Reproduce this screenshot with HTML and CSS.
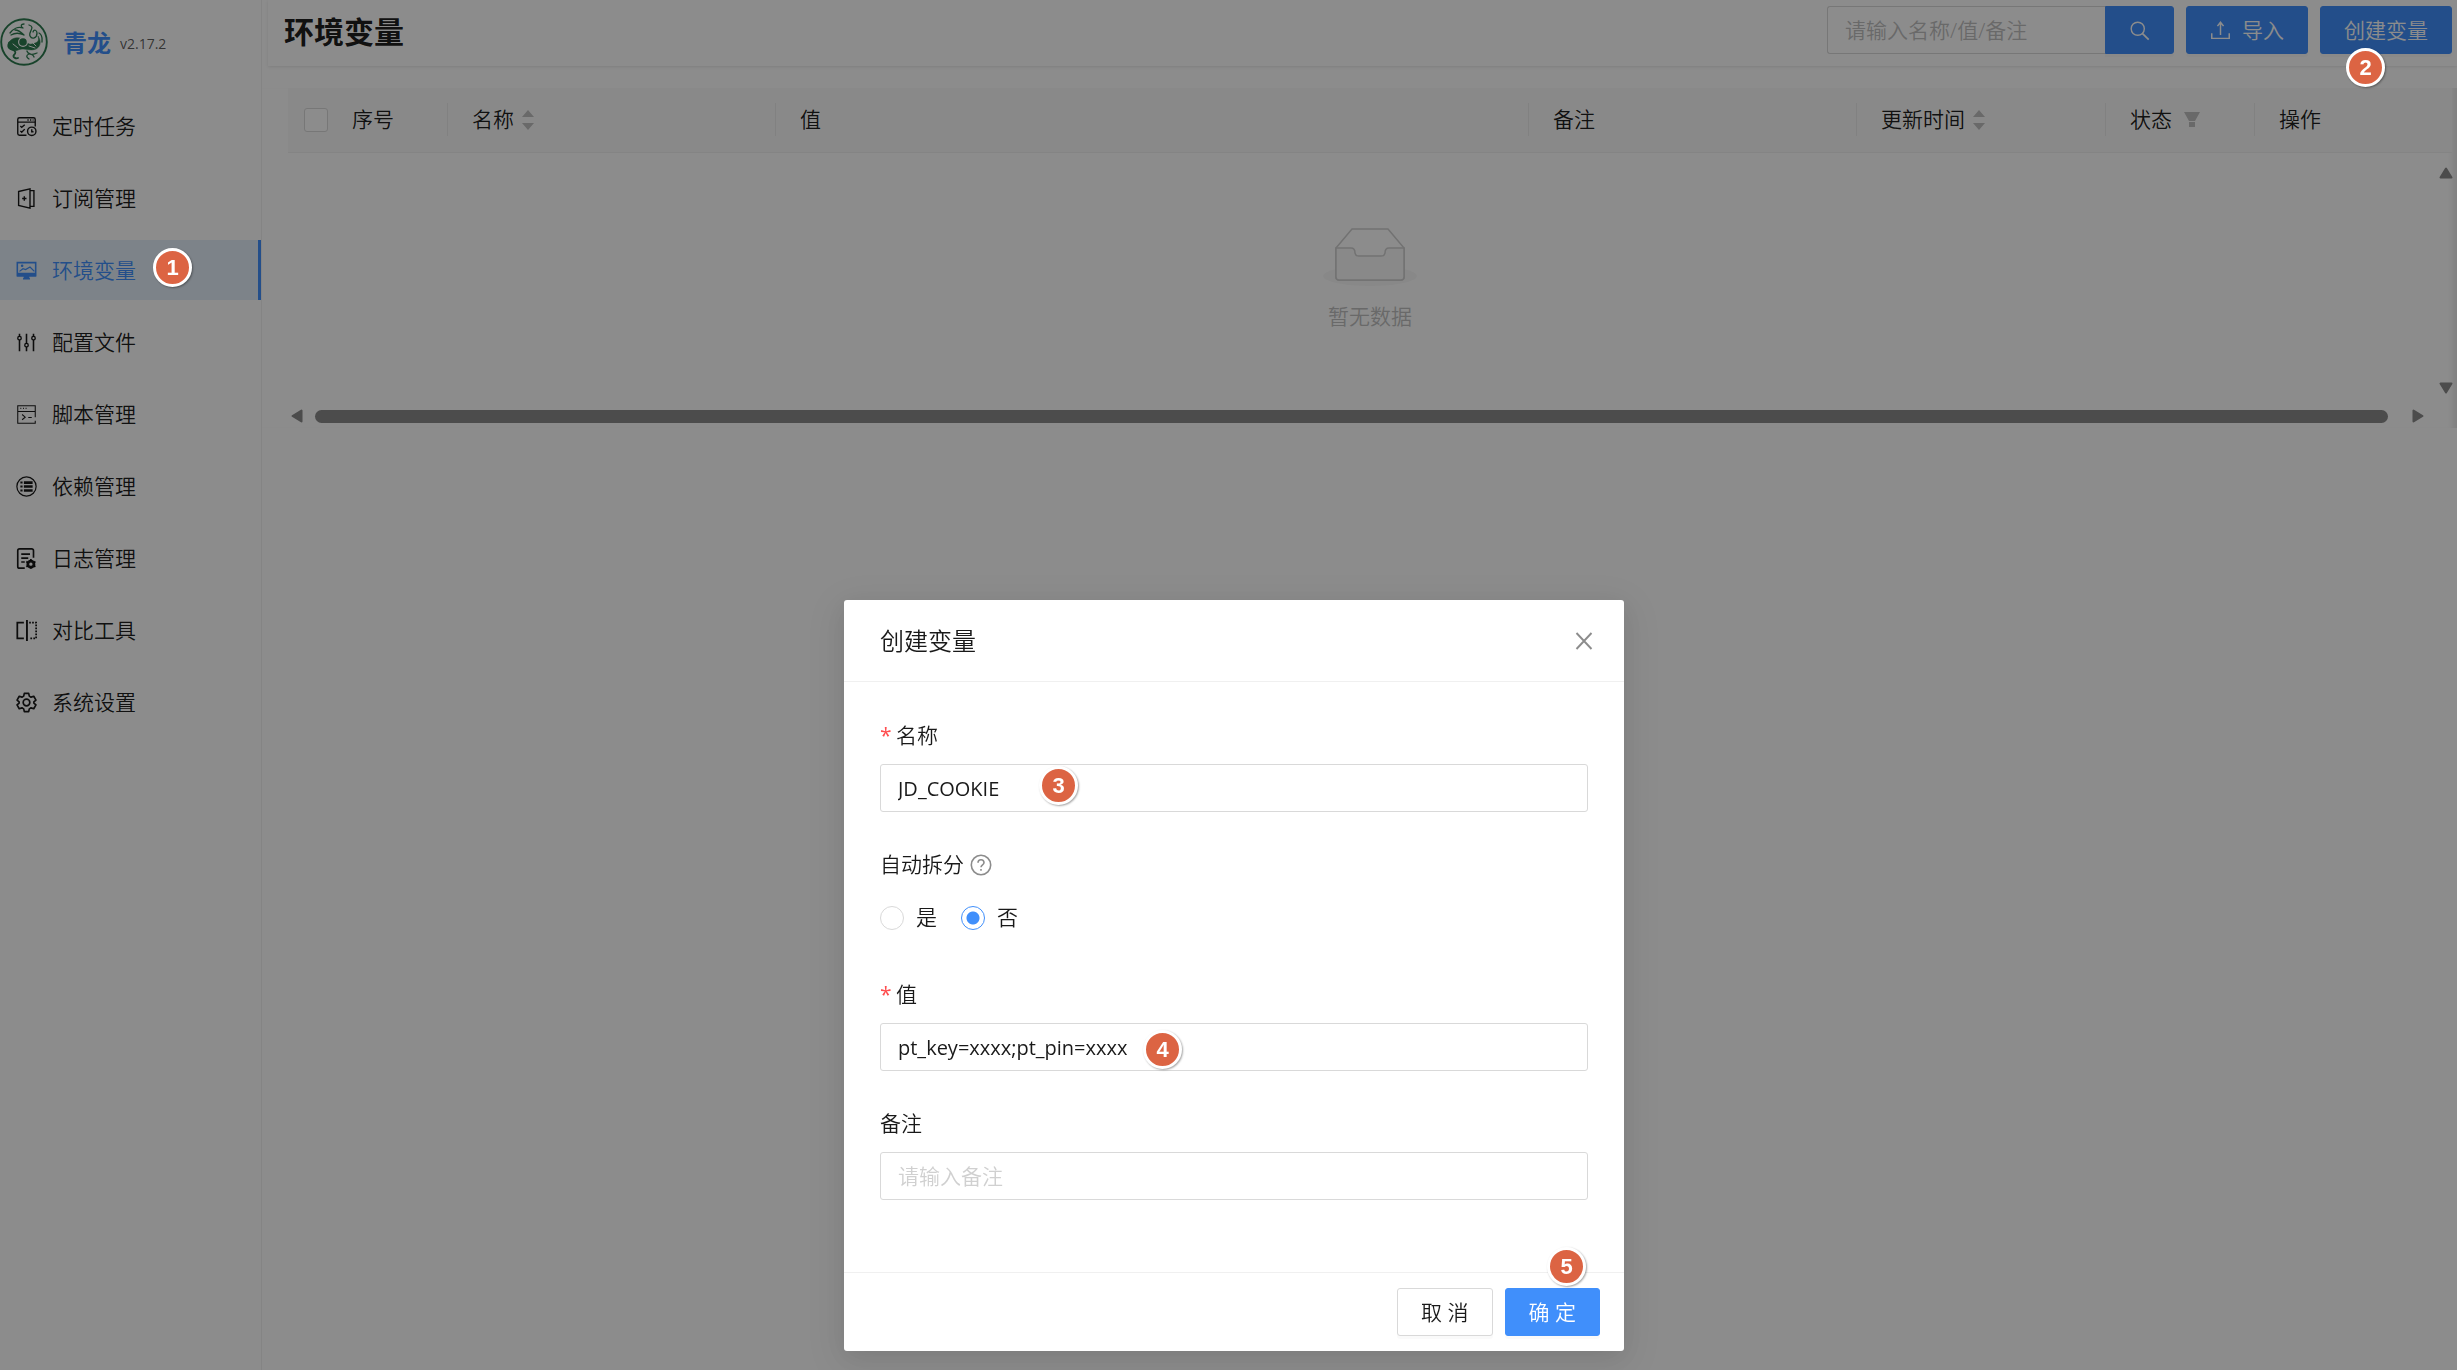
FILE: index.html
```html
<!DOCTYPE html>
<html lang="zh-CN">
<head>
<meta charset="utf-8">
<meta name="viewport" content="width=device-width, initial-scale=1">
<title>环境变量 - 青龙</title>
<link rel="stylesheet" href="styles.css">
</head>
<body>
<div class="layout">
  <aside class="sider">
    <div class="brand">
      <svg class="brand-logo" viewBox="0 0 48 48" fill="none" stroke="#2d7a4f" stroke-linecap="round">
        <circle cx="24" cy="24" r="22.8" stroke-width="1.900"/>
        <path d="M9 25c-2 5 1 6 4 7s3 3 1 5 2 4 4 3" stroke-width="1.800"/>
        <path d="M9 24c4-5 9-5 14-3 4 2 4 6 9 5 4-1 8-2 6-8 4 6 2 11-2 13-5 2-9 0-13 0-5 0-6 3-11 1-4-1-5-4-3-8z" fill="#2d7a4f" stroke-width=".5"/>
        <circle cx="23" cy="24" r="5" fill="#fff" stroke="none"/>
        <circle cx="23" cy="24" r="3.800" fill="#2d7a4f" stroke="none"/>
        <path d="M10 15c3-4 8-7 13-5M11 17c5-3 9-2 13 0M15 12c4 0 6 2 9 5M23 10c-3-2-2-4 1-4M29 7c7 2-1 7 1 11s7 2 7-3c0-3-3-4-4-1M27 33c0 3 7 3 7 6M28 35c4 3 6 1 9 0M29 41c-3-2-3-4 0-5M39 15c4 2 3 6 3 9" stroke-width="1.300"/>
        <path d="M13 26l5 4M29 28l6 2M33 25l3 3" stroke="#fff" stroke-width="1"/>
      </svg>
      <span class="brand-name">青龙</span>
      <span class="brand-version">v2.17.2</span>
    </div>
    <nav class="menu">
      <a class="menu-item" href="#crontab"><svg class="icon" viewBox="0 0 24 24"><path d="M22 12V4a2 2 0 0 0-2-2H4a2 2 0 0 0-2 2v16a2 2 0 0 0 2 2h8M2 7h20M13 4.500h1.500M16 4.500h1.500M19 4.500h1M5 11.500l1.500 1.500L10 10M5 17l1.500 1.500L10 15"/><circle cx="18" cy="17.500" r="4.800"/><path d="M18 15v3h2"/></svg><span>定时任务</span></a>
      <a class="menu-item" href="#subscription"><svg class="icon" viewBox="0 0 24 24"><path d="M3 4l13-3v22L3 20zM16 3h4.500v18H16M7 12h5M9.500 9.500v5"/></svg><span>订阅管理</span></a>
      <a class="menu-item active" href="#env" aria-current="page"><svg class="icon" viewBox="0 0 24 24"><path d="M1.500 3h21v15h-21z" stroke-width="1.800"/><path d="M4 13l4-3 3 1 5-3 5 5" stroke-width="1.400"/><circle cx="7" cy="6.500" r=".7" fill="currentColor"/><path d="M2 15.500h20V18H2zM9.500 18h5v3h-5z" fill="currentColor"/><path d="M8 21.500h8"/></svg><span>环境变量</span></a>
      <a class="menu-item" href="#config"><svg class="icon" viewBox="0 0 24 24"><path d="M4 2v3M4 9v13M12 2v11M12 17v5M20 2v3M20 9v13" stroke-width="1.800"/><circle cx="4" cy="7" r="2"/><circle cx="12" cy="15" r="2"/><circle cx="20" cy="7" r="2"/></svg><span>配置文件</span></a>
      <a class="menu-item" href="#script"><svg class="icon thin" viewBox="0 0 24 24"><path d="M22 15V2H2v20h20v-3M2 8.500h20M5 5h1M8 5h1M11 5h1M7 12l3.500 3L7 18M14 15.500h4"/></svg><span>脚本管理</span></a>
      <a class="menu-item" href="#dependence"><svg class="icon" viewBox="0 0 24 24"><circle cx="12" cy="12" r="11" stroke-width="1.400"/><path d="M9 7.500h10M9 12h10M9 16.500h10" stroke-width="3"/><path d="M5 7.500h2.500M5 12h2.500M5 16.500h2.500" stroke-width="2.400"/></svg><span>依赖管理</span></a>
      <a class="menu-item" href="#log"><svg class="icon" viewBox="0 0 24 24"><path d="M20 11V3a2 2 0 0 0-2-2H4a2 2 0 0 0-2 2v18a2 2 0 0 0 2 2h6M6 7h10M6 11.500h8M6 16h4" stroke-width="1.900"/><circle cx="17" cy="18.500" r="3.500" stroke-width="3.200"/><path d="M17 12.500v2M17 22.500v1M11.800 15.500l1.500 1M20.700 20.500l1.500 1M11.800 21.500l1.500-1M20.700 16.500l1.500-1" stroke-width="2"/></svg><span>日志管理</span></a>
      <a class="menu-item" href="#diff"><svg class="icon" viewBox="0 0 24 24"><path d="M9 3H1.500v18H9" stroke-width="2"/><path d="M12.500 0v24" stroke-width="2.200"/><path d="M15 3h8v18h-8" stroke-width="2" stroke-dasharray="2 1.400"/></svg><span>对比工具</span></a>
      <a class="menu-item" href="#setting"><svg class="icon" viewBox="0 0 24 24"><path stroke-width="1.900" stroke-linejoin="round" d="M9.500 1.500h5l.7 3.200 2 1.200 3.100-1 2.500 4.300-2.400 2.200v1.200l2.400 2.200-2.500 4.300-3.100-1-2 1.200-.7 3.200h-5l-.7-3.200-2-1.200-3.100 1-2.500-4.300 2.400-2.200v-1.200L1.200 9.200l2.500-4.300 3.100 1 2-1.200z"/><circle cx="12" cy="12" r="3.800" stroke-width="1.900"/></svg><span>系统设置</span></a>
    </nav>
  </aside>

  <main class="main">
    <header class="page-header">
      <h1 class="page-title">环境变量</h1>
      <div class="actions">
        <form class="search" role="search">
          <input class="search-input" type="search" aria-label="搜索" placeholder="请输入名称/值/备注">
          <button class="btn btn-primary search-btn" type="button" aria-label="搜索"><svg class="icon" viewBox="0 0 24 24"><circle cx="10" cy="10" r="7.500"/><path d="M15.500 15.500l7 7" stroke-width="2"/></svg></button>
        </form>
        <button class="btn btn-primary" type="button"><svg class="icon" viewBox="0 0 24 24"><path d="M2 15v6h20v-6M12 17V4M8.500 7L12 2.500 15.500 7" stroke-width="1.700"/></svg><span>导入</span></button>
        <button class="btn btn-primary" type="button">创建变量</button>
      </div>
    </header>

    <section class="table-area">
      <table class="table">
        <colgroup><col class="col-index"><col class="col-name"><col><col class="col-name"><col class="col-time"><col class="col-status"><col class="col-action"></colgroup>
        <thead>
          <tr>
            <th class="th-index"><div class="th-inner"><input class="checkbox" type="checkbox" aria-label="全选"><span>序号</span></div></th>
            <th><div class="th-inner">名称<svg class="sorter" viewBox="0 0 12 20"><path d="M6 0l6 7H0zM6 20l6-7H0z"/></svg></div></th>
            <th>值</th>
            <th>备注</th>
            <th><div class="th-inner">更新时间<svg class="sorter" viewBox="0 0 12 20"><path d="M6 0l6 7H0zM6 20l6-7H0z"/></svg></div></th>
            <th><div class="th-inner wide">状态<svg class="filter" viewBox="0 0 16 16"><path d="M0 0h16l-5 9H5zM5 10h6v5H5z"/></svg></div></th>
            <th>操作</th>
          </tr>
        </thead>
        <tbody>
          <tr>
            <td colspan="7">
              <div class="empty">
                <svg class="empty-icon" viewBox="0 0 96 60" fill="none" stroke="#d0d0d0" stroke-width="1.500">
                  <ellipse cx="48" cy="50" rx="47" ry="10" fill="#f8f8f8" stroke="none"/>
                  <path d="M14 22L30 3h36l16 19v29a3 3 0 0 1-3 3H17a3 3 0 0 1-3-3z" fill="#fff"/>
                  <path d="M14 22h15c3 0 4 2 4 5 1 3 2 3 4 3h22c2 0 3 0 4-3 0-3 1-5 4-5h15v29a3 3 0 0 1-3 3H17a3 3 0 0 1-3-3z" fill="#fafafa"/>
                </svg>
                <span>暂无数据</span>
              </div>
            </td>
          </tr>
        </tbody>
      </table>
      <div class="hscroll">
        <svg class="arrow-h" viewBox="0 0 12 14"><path d="M10.500 1.500v11L1.500 7z"/></svg>
        <div class="thumb"></div>
        <svg class="arrow-h" viewBox="0 0 12 14"><path d="M1.500 1.500v11l9-5.500z"/></svg>
      </div>
      <div class="vscroll">
        <svg class="arrow-v" viewBox="0 0 14 12"><path d="M1.500 10.500h11L7 1.500z"/></svg>
        <svg class="arrow-v" viewBox="0 0 14 12"><path d="M1.500 1.500h11L7 10.500z"/></svg>
      </div>
    </section>
  </main>
</div>

<div class="mask">
  <div class="modal" role="dialog" aria-modal="true" aria-labelledby="modal-title">
    <div class="modal-header">
      <h2 class="modal-title" id="modal-title">创建变量</h2>
      <button class="close" type="button" aria-label="关闭"><svg viewBox="0 0 18 18" width="18" height="18"><path d="M1.500 1l15 16M16.500 1l-15 16" stroke="currentColor" stroke-width="1.900"/></svg></button>
    </div>
    <form class="modal-body">
      <div class="field">
        <label class="label" for="name"><span class="required">*</span>名称</label>
        <input class="input" id="name" type="text" value="JD_COOKIE">
        <span class="badge badge-name">3</span>
      </div>
      <fieldset class="field">
        <legend class="label">自动拆分<svg class="help" viewBox="0 0 22 22" fill="none" stroke="currentColor" stroke-width="1.600"><circle cx="11" cy="11" r="9.700"/><path d="M8 8.800c0-4 6-4 6 0 0 2-3 2.200-3 4.400M11 15v1.800"/></svg></legend>
        <div class="radios">
          <label class="radio-label"><input class="radio" type="radio" name="split"><span>是</span></label>
          <label class="radio-label"><input class="radio" type="radio" name="split" checked><span>否</span></label>
        </div>
      </fieldset>
      <div class="field">
        <label class="label" for="value"><span class="required">*</span>值</label>
        <input class="input" id="value" type="text" value="pt_key=xxxx;pt_pin=xxxx">
        <span class="badge badge-value">4</span>
      </div>
      <div class="field">
        <label class="label" for="remarks">备注</label>
        <input class="input input-remarks" id="remarks" type="text" placeholder="请输入备注">
      </div>
    </form>
    <div class="modal-footer">
      <button class="btn" type="button">取 消</button>
      <button class="btn btn-primary" type="button">确 定</button>
      <span class="badge badge-ok">5</span>
    </div>
  </div>
</div>
<span class="badge badge-menu">1</span>
<span class="badge badge-create">2</span>
</body>
</html>
```
FILE: styles.css
```css
:root {
  --primary: #408ffb;
  --text: rgba(0, 0, 0, .9);
  --border: #d9d9d9;
  --split: #f0f0f0;
}

* { box-sizing: border-box; }

body {
  margin: 0;
  background: #fff;
  color: var(--text);
  font: 350 21px/33px "Open Sans", "Noto Sans CJK SC", sans-serif;
}

button, input { font: inherit; color: inherit; }

.layout {
  display: flex;
  min-height: 100vh;
}

.icon {
  width: 21px;
  height: 21px;
  flex: none;
  fill: none;
  stroke: currentColor;
  stroke-width: 1.6;
}
.icon.thin { stroke-width: 1.2; }

/* Sidebar */
.sider {
  flex: none;
  width: 262px;
  border-right: 1px solid var(--split);
}
.brand {
  display: flex;
  align-items: center;
  height: 84px;
}
.brand-logo { width: 48px; height: 48px; }
.brand-name {
  margin: 0 9px 0 15px;
  color: var(--primary);
  font-size: 24px;
  font-weight: 700;
}
.brand-version {
  padding-top: 3px;
  color: rgba(0, 0, 0, .65);
  font-size: 14px;
  font-weight: 400;
}
.menu {
  display: flex;
  flex-direction: column;
  gap: 12px;
  padding-top: 12px;
}
.menu-item {
  display: flex;
  align-items: center;
  gap: 15px;
  height: 60px;
  padding: 1px 0 0 16px;
  border-right: 3px solid transparent;
  color: inherit;
  text-decoration: none;
}
.menu-item.active {
  background: #e4effa;
  border-color: var(--primary);
  color: var(--primary);
}

/* Page header */
.main { flex: 1; min-width: 0; }
.page-header {
  display: flex;
  justify-content: space-between;
  height: 66px;
  margin-left: 6px;
  padding: 6px 5px 0 16px;
  box-shadow: 0 1px 3px rgba(0, 0, 0, .1);
}
.page-title {
  margin: 0;
  font-size: 30px;
  line-height: 52px;
  font-weight: 700;
}
.actions { display: flex; gap: 12px; }
.search { display: flex; }
.search-input {
  width: 278px;
  height: 48px;
  padding: 0 17px;
  border: 1px solid var(--border);
  border-right: 0;
  border-radius: 3px 0 0 3px;
  background: #fff;
  outline: 0;
}
::placeholder { color: #bfbfbf; opacity: 1; }

.btn {
  display: flex;
  align-items: center;
  gap: 11px;
  height: 48px;
  padding: 0 23px;
  border: 1px solid var(--border);
  border-radius: 3px;
  background: #fff;
  white-space: nowrap;
  box-shadow: 0 3px 0 rgba(0, 0, 0, .02);
}
.btn-primary {
  border-color: var(--primary);
  background: var(--primary);
  color: #fff;
}
.search-btn { border-radius: 0 3px 3px 0; }

/* Table */
.table-area {
  position: relative;
  margin-top: 22px;
  padding: 0 5px 0 26px;
  box-shadow: inset -8px 0 5px -3px rgba(0, 0, 0, .08);
}
.table {
  width: 100%;
  table-layout: fixed;
  border-collapse: collapse;
}
.col-index { width: 160px; }
.col-name { width: 328px; }
.col-time { width: 249px; }
.col-status { width: 149px; }
.col-action { width: 197px; }
.table th {
  position: relative;
  height: 64px;
  padding: 0 24px;
  border-bottom: 1px solid var(--split);
  background: #fafafa;
  font-weight: 350;
  text-align: left;
}
.table th:not(:last-child)::after {
  content: "";
  position: absolute;
  top: 15px;
  right: 0;
  width: 1px;
  height: 33px;
  background: #ececec;
}
.table .th-index { padding: 0 16px; }
.th-inner { display: flex; align-items: center; gap: 8px; }
.th-inner.wide { gap: 12px; }
.th-index .th-inner { gap: 24px; }
.checkbox {
  appearance: none;
  width: 24px;
  height: 24px;
  margin: 0;
  border: 1px solid var(--border);
  border-radius: 3px;
  background: #fff;
}
.sorter, .filter { fill: #bfbfbf; }
.sorter { width: 12px; height: 20px; }
.filter { width: 16px; height: 16px; }
.table td { height: 252px; padding: 0; vertical-align: top; }
.empty {
  display: flex;
  flex-direction: column;
  align-items: center;
  gap: 14px;
  padding-top: 73px;
  color: #bfbfbf;
}
.empty-icon { width: 96px; height: 60px; }
.hscroll {
  display: flex;
  align-items: center;
  justify-content: space-between;
  gap: 12px;
  height: 24px;
  padding: 0 28px 0 3px;
}
.hscroll .arrow-h:last-child { margin-left: 12px; }
.thumb {
  flex: 1;
  height: 13px;
  border-radius: 7px;
  background: #8a8a8a;
}
.arrow-h, .arrow-v {
  flex: none;
  fill: #8a8a8a;
  stroke: #8a8a8a;
  stroke-width: 2;
  stroke-linejoin: round;
}
.arrow-h { width: 12px; height: 14px; }
.arrow-v { width: 14px; height: 12px; }
.vscroll {
  position: absolute;
  top: 64px;
  right: 4px;
  bottom: 24px;
  display: flex;
  flex-direction: column;
  justify-content: space-between;
  padding: 15px 0 10px;
}

/* Dialog */
.mask {
  position: fixed;
  inset: 0;
  display: flex;
  justify-content: center;
  align-items: flex-end;
  padding: 0 0 19px 11px;
  background: rgba(0, 0, 0, .45);
}
.modal {
  width: 780px;
  border-radius: 3px;
  background: #fff;
  box-shadow: 0 9px 42px 12px rgba(0, 0, 0, .06), 0 6px 24px rgba(0, 0, 0, .08);
}
.modal-header {
  display: flex;
  justify-content: space-between;
  align-items: center;
  height: 82px;
  padding: 0 30px 0 36px;
  border-bottom: 1px solid var(--split);
}
.modal-title {
  margin: 0;
  font-size: 24px;
  font-weight: 350;
}
.close {
  display: flex;
  padding: 1px;
  border: 0;
  background: none;
  color: #8c8c8c;
}
.modal-body {
  display: flex;
  flex-direction: column;
  gap: 36px;
  padding: 37px 36px 72px;
}
.field {
  position: relative;
  min-width: 0;
  margin: 0;
  padding: 0;
  border: 0;
}
.label {
  display: flex;
  align-items: center;
  width: 100%;
  height: 33px;
  margin-bottom: 12px;
  padding: 0;
}
.required {
  width: 16px;
  color: #ff4d4f;
  font-weight: 400;
}
.help {
  width: 22px;
  height: 22px;
  margin-left: 6px;
  color: #8c8c8c;
}
.input {
  display: block;
  width: 100%;
  height: 48px;
  padding: 0 17px;
  border: 1px solid var(--border);
  border-radius: 3px;
  background: #fff;
  font-size: 20px;
  font-weight: 400;
  outline: 0;
}
.input-remarks {
  font-size: 21px;
  font-weight: 350;
}
.modal ::placeholder { color: #d0d0d0; }
.radios {
  display: flex;
  gap: 24px;
  height: 49px;
}
.radio-label {
  display: flex;
  align-items: center;
  gap: 12px;
}
.radio {
  appearance: none;
  width: 24px;
  height: 24px;
  margin: 0;
  border: 1px solid var(--border);
  border-radius: 50%;
}
.radio:checked {
  border-color: var(--primary);
  background: radial-gradient(circle, var(--primary) 6px, transparent 7px);
}
.modal-footer {
  position: relative;
  display: flex;
  justify-content: flex-end;
  gap: 12px;
  padding: 15px 24px;
  border-top: 1px solid var(--split);
}

/* Numbered step markers */
.badge {
  position: absolute;
  width: 39px;
  height: 39px;
  border: 3px solid #fff;
  border-radius: 50%;
  background: #dc6443;
  color: #fff;
  font: 700 22px/33px "Liberation Sans", sans-serif;
  text-align: center;
  box-shadow: 1px 1px 2px rgba(0, 0, 0, .35);
}
.badge-menu { left: 153px; top: 248px; }
.badge-create { right: 72px; top: 48px; }
.badge-name { left: 159px; top: 47px; }
.badge-value { left: 263px; top: 52px; }
.badge-ok { right: 38px; top: -26px; }
```
